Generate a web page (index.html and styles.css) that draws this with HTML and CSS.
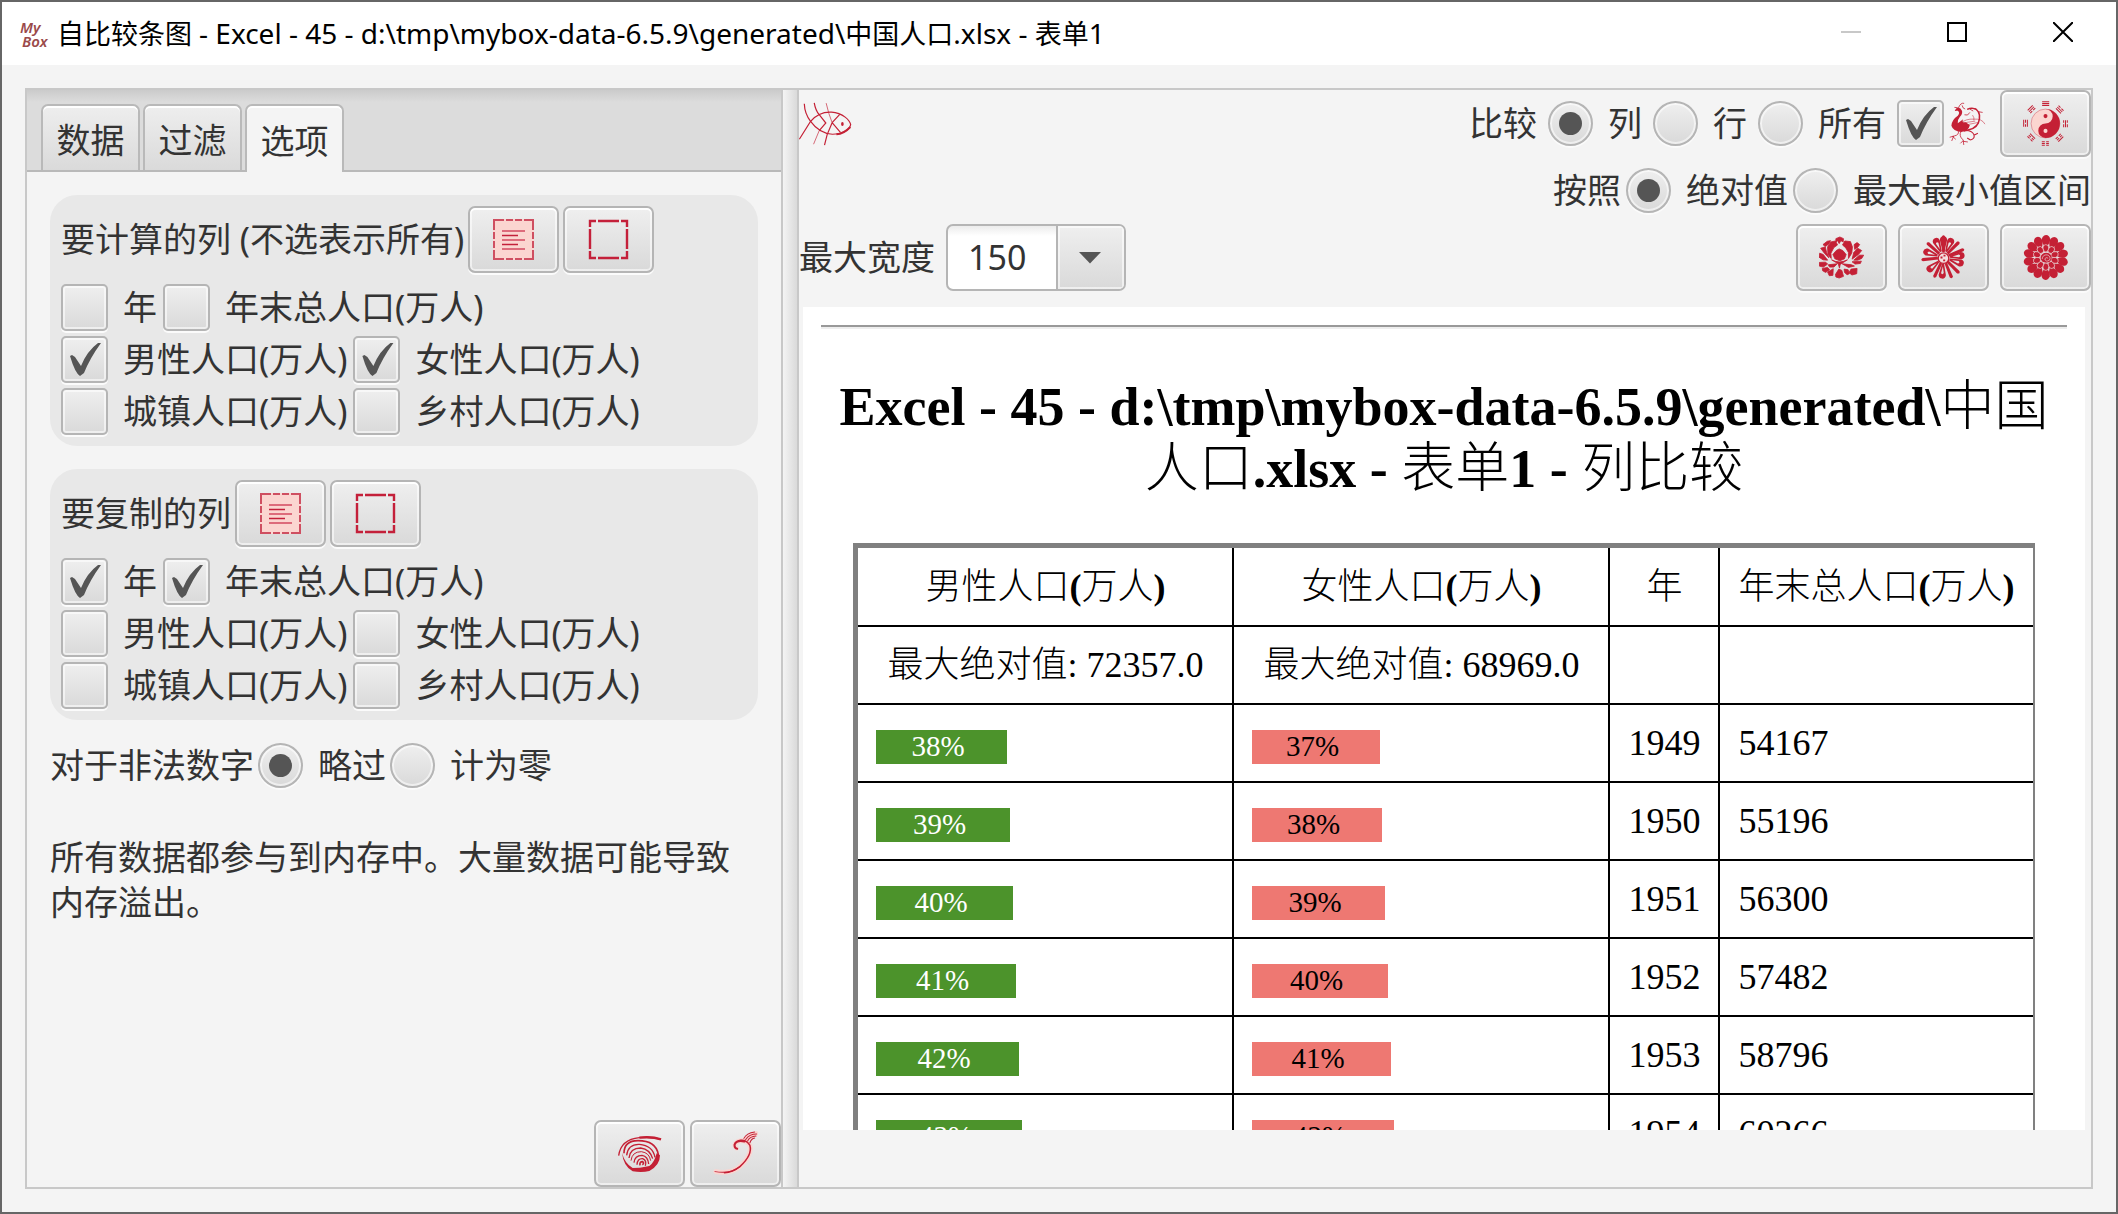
FILE: index.html
```html
<!DOCTYPE html>
<html lang="zh-CN">
<head>
<meta charset="utf-8">
<title>自比较条图</title>
<link rel="stylesheet" href="styles.css">
</head>
<body>
<svg class="sprite" aria-hidden="true">
  <defs>
    <symbol id="select-all" viewBox="0 0 41 41">
      <rect x="0" y="0" width="41" height="41" fill="#fbd5d0"/>
      <path d="M1 11V1H11M13 1H20M22 1H29M31 1H40V11M40 13V20M40 22V29M40 31V40H31M29 40H22M20 40H13M11 40H1V31M1 29V22M1 20V13" fill="none" stroke="#cf4f61" stroke-width="2"/>
      <path d="M9 12H32M9 21H32M9 30H32" stroke="#dd6b7b" stroke-width="2"/>
      <path d="M9 16.5H25M9 25.5H25" stroke="#c4203a" stroke-width="1.5"/>
    </symbol>
    <symbol id="select-none" viewBox="0 0 41 41">
      <path d="M2 8V2H8M10 2H31M33 2H39V8M39 10V30M39 32V39H33M31 39H10M8 39H2V32M2 30V10" fill="none" stroke="#c4203a" stroke-width="2.4"/>
    </symbol>
    <symbol id="fish" viewBox="57 130 160 132">
      <g fill="none" stroke="#c42035" stroke-width="3.6">
        <path d="M92 188C112 164 135 159 155 160C190 162 211 186 213 198C209 216 184 227 158 227C128 225 105 206 92 188Z"/>
        <path d="M73 135C74 160 84 178 92 188L58 242M103 132Q107 155 118 168L138 193L118 216"/>
        <path d="M157 192L180 167M157 192L182 221M157 192L142 228L134 260"/>
        <path d="M170 227Q192 226 212 205" stroke-width="6"/>
        <path d="M118 216L101 257M139 133Q146 165 157 192" stroke-width="2"/>
      </g>
      <ellipse cx="188" cy="196" rx="4" ry="6" fill="#c42035"/>
    </symbol>
    <symbol id="phoenix" viewBox="30 32 110 134">
      <path d="M47 62Q52 47 64 54Q75 66 62 80Q54 90 56 98L72 86Q66 98 80 95L92 104Q88 122 66 124Q42 122 37 106Q38 88 56 76Q64 66 56 61Q52 60 47 62Z" fill="#c42035"/>
      <g fill="none" stroke="#c42035" stroke-width="2.4">
        <path d="M84 57Q100 50 112 58Q127 70 117 98Q108 117 74 121" stroke-width="4.5"/>
        <path d="M46 51L56 52M58 53Q64 36 75 39M69 45Q70 54 78 56M76 73Q86 78 92 66M92 56L102 62M104 56Q110 50 114 60M118 64L130 66"/>
        <path d="M62 100Q80 84 104 86Q128 84 137 101M60 106Q84 92 108 92M66 112Q92 98 116 96M100 74Q106 82 104 90" stroke-width="1.6"/>
        <path d="M58 122Q60 133 46 136L32 140M44 136L38 151M40 137L50 146"/>
        <path d="M66 122Q58 136 72 148L74 163M72 150L64 158M72 152L86 154"/>
        <path d="M80 120Q98 120 104 132Q108 144 94 148M104 134L116 128M94 148L84 142" stroke-width="3.2"/>
      </g>
    </symbol>
    <symbol id="bagua" viewBox="246 30 140 140">
      <circle cx="316" cy="100" r="43" fill="#fbd5d0" stroke="#cf5565" stroke-width="1.5"/>
      <path d="M316 57A43 43 0 0 1 316 143A21.5 21.5 0 0 1 316 100A21.5 21.5 0 0 0 316 57Z" fill="#c42035"/>
      <circle cx="316" cy="78" r="6" fill="#c42035"/><circle cx="316" cy="122" r="6" fill="#fbd5d0"/>
      <g fill="none" stroke="#c42035" stroke-width="3">
        <path d="M306 35H327M306 40.500H327M306 46H327"/>
        <path transform="rotate(45 316 100)" d="M306 35H314M318 35H327M306 40.500H327M306 46H327"/>
        <path transform="rotate(90 316 100)" d="M306 35H314M318 35H327M306 40.500H327M306 46H314M318 46H327"/>
        <path transform="rotate(135 316 100)" d="M306 35H327M306 40.500H314M318 40.500H327M306 46H314M318 46H327"/>
        <path transform="rotate(180 316 100)" d="M306 35H314M318 35H327M306 40.500H314M318 40.500H327M306 46H314M318 46H327"/>
        <path transform="rotate(225 316 100)" d="M306 35H314M318 35H327M306 40.500H314M318 40.500H327M306 46H327"/>
        <path transform="rotate(270 316 100)" d="M306 35H327M306 40.500H314M318 40.500H327M306 46H327"/>
        <path transform="rotate(315 316 100)" d="M306 35H327M306 40.500H327M306 46H314M318 46H327"/>
      </g>
    </symbol>
    <symbol id="peony" viewBox="177 77 136 136">
      <g fill="#c42035" stroke="#c42035" stroke-width="2.5" stroke-linejoin="round">
        <path d="M219 136L229 124L238 119L249 124L259 136L254 149L240 155L225 149Z"/>
        <path d="M228 88L240 83L251 88L250 98L243 94L238 103L233 94L228 98Z"/>
        <path d="M213 98L227 95L233 107L222 115L213 132L214 148L204 136L203 113Z"/>
        <path d="M255 95L272 97L278 113L276 132L266 148L266 130L258 116L248 107Z"/>
        <path d="M189 106L202 96L212 94L207 104L196 112Z"/>
        <path d="M283 106L292 100L300 106L294 114L285 121Z"/>
        <path d="M182 117L196 113L200 130L207 146L194 133Z"/>
        <path d="M282 130L294 117L306 124L296 136L277 150Z"/>
        <path d="M179 132L190 136L203 153L189 152L177 144Z"/>
        <path d="M282 153L299 138L312 138L306 148L294 153Z"/>
        <path d="M178 160L197 159L203 165L190 174L178 171Z"/>
        <path d="M277 158L305 156L302 163L286 165Z"/>
        <path d="M205 167L232 164L222 174L209 174Z"/>
        <path d="M247 164L275 167L284 171L266 175Z"/>
        <path d="M187 178L203 175L209 182L197 190L188 185Z"/>
        <path d="M274 180L292 178L291 194L276 198L268 190Z"/>
        <path d="M203 189L220 179L219 199L208 200Z"/>
        <path d="M253 180L265 182L269 194L262 197L254 190Z"/>
        <path d="M227 196L237 180L246 184L251 202L238 207L228 204Z"/>
        <path d="M215 152Q238 165 263 152L241 166L239 177L235 164Z"/>
      </g>
    </symbol>
    <symbol id="daisy" viewBox="483 75 136 136">
      <g fill="#c42035">
        <path id="daisy-thin" d="M547 126L546 80Q551 71 556 80L555 126Z"/>
        <use href="#daisy-thin" transform="rotate(45 551 143)"/>
        <use href="#daisy-thin" transform="rotate(68 551 143)"/>
        <use href="#daisy-thin" transform="rotate(135 551 143)"/>
        <use href="#daisy-thin" transform="rotate(158 551 143)"/>
        <use href="#daisy-thin" transform="rotate(205 551 143)"/>
        <use href="#daisy-thin" transform="rotate(264 551 143)"/>
        <use href="#daisy-thin" transform="rotate(312 551 143)"/>
        <g id="daisy-wide"><path fill-rule="evenodd" d="M548 124L540 90Q541 79 551 79Q561 79 562 90L554 124ZM551 116L555 96Q551 89 547 96Z"/></g>
        <use href="#daisy-wide" transform="rotate(24 551 143)"/>
        <use href="#daisy-wide" transform="rotate(84 551 143)"/>
        <use href="#daisy-wide" transform="rotate(108 551 143)"/>
        <use href="#daisy-wide" transform="rotate(184 551 143)"/>
        <use href="#daisy-wide" transform="rotate(230 551 143)"/>
        <use href="#daisy-wide" transform="rotate(288 551 143)"/>
        <use href="#daisy-wide" transform="rotate(336 551 143)"/>
      </g>
      <circle cx="551" cy="145" r="16" fill="#f4dfdf" stroke="#c42035" stroke-width="4"/>
      <path d="M542 140h6v6h-6zM551 135h6v5h-6zM550 149h6v5h-6z" fill="#c42035"/>
    </symbol>
    <symbol id="dahlia" viewBox="789 77 136 136">
      <g fill="#c42035">
        <path id="dahlia-outer" d="M858 115Q844 101 846 88Q850 77 859 77Q869 78 871 89Q872 102 858 115Z"/>
        <use href="#dahlia-outer" transform="rotate(26 858 145)"/>
        <use href="#dahlia-outer" transform="rotate(51 858 145)"/>
        <use href="#dahlia-outer" transform="rotate(77 858 145)"/>
        <use href="#dahlia-outer" transform="rotate(103 858 145)"/>
        <use href="#dahlia-outer" transform="rotate(128 858 145)"/>
        <use href="#dahlia-outer" transform="rotate(154 858 145)"/>
        <use href="#dahlia-outer" transform="rotate(180 858 145)"/>
        <use href="#dahlia-outer" transform="rotate(206 858 145)"/>
        <use href="#dahlia-outer" transform="rotate(231 858 145)"/>
        <use href="#dahlia-outer" transform="rotate(257 858 145)"/>
        <use href="#dahlia-outer" transform="rotate(283 858 145)"/>
        <use href="#dahlia-outer" transform="rotate(308 858 145)"/>
        <use href="#dahlia-outer" transform="rotate(334 858 145)"/>
      </g>
      <g fill="#c42035" stroke="#ead9d9" stroke-width="2">
        <ellipse id="dahlia-inner" cx="858" cy="117" rx="9" ry="11"/>
        <use href="#dahlia-inner" transform="rotate(36 858 145)"/>
        <use href="#dahlia-inner" transform="rotate(72 858 145)"/>
        <use href="#dahlia-inner" transform="rotate(108 858 145)"/>
        <use href="#dahlia-inner" transform="rotate(144 858 145)"/>
        <use href="#dahlia-inner" transform="rotate(180 858 145)"/>
        <use href="#dahlia-inner" transform="rotate(216 858 145)"/>
        <use href="#dahlia-inner" transform="rotate(252 858 145)"/>
        <use href="#dahlia-inner" transform="rotate(288 858 145)"/>
        <use href="#dahlia-inner" transform="rotate(324 858 145)"/>
      </g>
      <ellipse cx="859" cy="146" rx="17" ry="15" fill="#c42035"/>
      <path d="M847 150Q848 136 862 137Q875 142 869 153Q857 160 855 149Q858 143 865 147" fill="none" stroke="#ead9d9" stroke-width="2"/>
    </symbol>
    <symbol id="shell" viewBox="86 64 132 112">
      <g fill="none" stroke="#c42035">
        <path d="M88 125Q95 76 150 71Q188 67 215 76" stroke-width="4"/>
        <path d="M150 71Q188 67 215 76" stroke-width="7"/>
        <path d="M104 118Q104 80 146 80Q200 80 207 122Q208 148 184 162" stroke-width="5"/>
        <path d="M112 124Q116 90 150 91Q190 94 197 130" stroke-width="4"/>
        <path d="M119 132Q122 102 154 102Q182 106 190 134" stroke-width="4"/>
        <path d="M125 140Q128 113 156 113Q180 116 184 140" stroke-width="3"/>
        <path d="M134 146Q136 124 158 124Q176 127 178 150" stroke-width="4"/>
        <path d="M143 152Q144 133 160 134Q173 140 168 155" stroke-width="4"/>
        <path d="M152 154Q150 143 160 143Q166 148 159 152" stroke-width="5"/>
      </g>
      <path d="M98 116Q106 148 130 162L152 161L180 156Q194 148 202 118L212 124Q212 154 180 171Q158 177 130 172Q102 156 98 116Z" fill="#c42035"/>
    </symbol>
    <symbol id="plume" viewBox="366 46 134 140">
      <g fill="none" stroke-linecap="round">
        <g stroke="#fbd5d0" stroke-width="14">
          <path d="M374 170Q418 178 446 155Q484 120 476 92Q462 72 440 80Q424 90 436 100M464 72L494 56"/>
        </g>
        <g stroke="#c42035" stroke-width="3">
          <path d="M372 170Q418 178 446 155"/>
          <path d="M400 173Q424 172 446 155Q484 120 476 92Q466 74 446 77" stroke-width="4.500"/>
          <path d="M460 80Q436 74 430 90Q430 101 438 102" stroke-width="6"/>
          <path d="M458 71Q466 55 490 52M463 75Q474 58 496 58M469 79Q476 65 494 64M476 84Q480 72 490 70"/>
        </g>
      </g>
    </symbol>
  </defs>
</svg>

<div class="window">
  <header class="titlebar">
    <span class="logo" aria-hidden="true"><span>My</span><span>Box</span></span>
    <h1 class="title">自比较条图 <span class="latin">- Excel - 45 - d:\tmp\mybox-data-6.5.9\generated\</span>中国人口<span class="latin">.xlsx - </span>表单<span class="latin">1</span></h1>
    <div class="caption">
      <button type="button" aria-label="最小化" disabled><svg width="20" height="20"><path d="M0 10H20" stroke="#c8c8c8" stroke-width="2"/></svg></button>
      <button type="button" aria-label="最大化"><svg width="20" height="20"><path d="M1 1H19V19H1Z" fill="none" stroke="#000" stroke-width="2"/></svg></button>
      <button type="button" aria-label="关闭"><svg width="20" height="20"><path d="M0 0L20 20M20 0L0 20" stroke="#000" stroke-width="2"/></svg></button>
    </div>
  </header>

  <main class="split">
    <section class="left">
      <div class="tabs" role="tablist">
        <button type="button" class="tab" role="tab">数据</button>
        <button type="button" class="tab" role="tab">过滤</button>
        <button type="button" class="tab selected" role="tab" aria-selected="true">选项</button>
      </div>
      <div class="options">
        <fieldset class="group">
          <div class="row heading">
            <span>要计算的列 (不选表示所有)</span>
            <button type="button" class="btn" aria-label="全选"><svg class="ic-box"><use href="#select-all"/></svg></button>
            <button type="button" class="btn" aria-label="全不选"><svg class="ic-box"><use href="#select-none"/></svg></button>
          </div>
          <div class="row">
            <label class="choice"><input type="checkbox">年</label>
            <label class="choice"><input type="checkbox">年末总人口(万人)</label>
          </div>
          <div class="row">
            <label class="choice"><input type="checkbox" checked>男性人口(万人)</label>
            <label class="choice"><input type="checkbox" checked>女性人口(万人)</label>
          </div>
          <div class="row">
            <label class="choice"><input type="checkbox">城镇人口(万人)</label>
            <label class="choice"><input type="checkbox">乡村人口(万人)</label>
          </div>
        </fieldset>
        <fieldset class="group">
          <div class="row heading">
            <span>要复制的列</span>
            <button type="button" class="btn" aria-label="全选"><svg class="ic-box"><use href="#select-all"/></svg></button>
            <button type="button" class="btn" aria-label="全不选"><svg class="ic-box"><use href="#select-none"/></svg></button>
          </div>
          <div class="row">
            <label class="choice"><input type="checkbox" checked>年</label>
            <label class="choice"><input type="checkbox" checked>年末总人口(万人)</label>
          </div>
          <div class="row">
            <label class="choice"><input type="checkbox">男性人口(万人)</label>
            <label class="choice"><input type="checkbox">女性人口(万人)</label>
          </div>
          <div class="row">
            <label class="choice"><input type="checkbox">城镇人口(万人)</label>
            <label class="choice"><input type="checkbox">乡村人口(万人)</label>
          </div>
        </fieldset>
        <div class="row heading">
          <span>对于非法数字</span>
          <label class="choice"><input type="radio" name="invalid" checked>略过</label>
          <label class="choice"><input type="radio" name="invalid">计为零</label>
        </div>
        <p class="note">所有数据都参与到内存中。大量数据可能导致内存溢出。</p>
      </div>
      <div class="row actions">
        <button type="button" class="btn" aria-label="恢复"><svg class="ic-shell"><use href="#shell"/></svg></button>
        <button type="button" class="btn" aria-label="确定"><svg class="ic-plume"><use href="#plume"/></svg></button>
      </div>
    </section>

    <div class="divider" role="separator"></div>

    <section class="right">
      <div class="toolbar">
        <svg class="ic-fish" role="img" aria-label="提示"><use href="#fish"/></svg>
        <span class="spacer"></span>
        <span>比较</span>
        <label class="choice"><input type="radio" name="compare" checked>列</label>
        <label class="choice"><input type="radio" name="compare">行</label>
        <label class="choice"><input type="radio" name="compare">所有</label>
        <label class="choice tight"><input type="checkbox" checked aria-label="弹出"><svg class="ic-phoenix"><use href="#phoenix"/></svg></label>
        <button type="button" class="btn" aria-label="功能"><svg class="ic-bagua"><use href="#bagua"/></svg></button>
      </div>
      <div class="toolbar compact">
        <span class="spacer"></span>
        <span>按照</span>
        <label class="choice"><input type="radio" name="by" checked>绝对值</label>
        <label class="choice"><input type="radio" name="by">最大最小值区间</label>
      </div>
      <div class="toolbar">
        <label for="max-width">最大宽度</label>
        <span class="combo"><select id="max-width"><option>150</option></select></span>
        <span class="spacer"></span>
        <button type="button" class="btn" aria-label="随机颜色"><svg class="ic-flower"><use href="#peony"/></svg></button>
        <button type="button" class="btn" aria-label="数据"><svg class="ic-flower"><use href="#daisy"/></svg></button>
        <button type="button" class="btn" aria-label="编辑"><svg class="ic-flower"><use href="#dahlia"/></svg></button>
      </div>

      <article class="web">
        <hr>
        <h2>Excel - 45 - d:\tmp\mybox-data-6.5.9\generated\<span class="han">中国人口</span>.xlsx - <span class="han">表单</span>1 - <span class="han">列比较</span></h2>
        <table>
          <thead>
            <tr>
              <th class="bar-col"><span class="han">男性人口</span>(<span class="han">万人</span>)</th>
              <th class="bar-col"><span class="han">女性人口</span>(<span class="han">万人</span>)</th>
              <th><span class="han">年</span></th>
              <th><span class="han">年末总人口</span>(<span class="han">万人</span>)</th>
            </tr>
          </thead>
          <tbody>
            <tr><td class="center"><span class="han">最大绝对值</span>: 72357.0</td><td class="center"><span class="han">最大绝对值</span>: 68969.0</td><td></td><td></td></tr>
            <tr><td><div class="bar male" style="width:131px">38%</div></td><td><div class="bar female" style="width:128px">37%</div></td><td>1949</td><td>54167</td></tr>
            <tr><td><div class="bar male" style="width:134px">39%</div></td><td><div class="bar female" style="width:130px">38%</div></td><td>1950</td><td>55196</td></tr>
            <tr><td><div class="bar male" style="width:137px">40%</div></td><td><div class="bar female" style="width:133px">39%</div></td><td>1951</td><td>56300</td></tr>
            <tr><td><div class="bar male" style="width:140px">41%</div></td><td><div class="bar female" style="width:136px">40%</div></td><td>1952</td><td>57482</td></tr>
            <tr><td><div class="bar male" style="width:143px">42%</div></td><td><div class="bar female" style="width:139px">41%</div></td><td>1953</td><td>58796</td></tr>
            <tr><td><div class="bar male" style="width:146px">43%</div></td><td><div class="bar female" style="width:142px">42%</div></td><td>1954</td><td>60266</td></tr>
          </tbody>
        </table>
      </article>
    </section>
  </main>
</div>
</body>
</html>
```
FILE: styles.css
```css
* { box-sizing: border-box; }

body {
  margin: 0;
  font-family: "Noto Sans", "Noto Sans CJK SC", sans-serif;
  font-size: 34px;
  line-height: 45px;
  color: #333;
  background: #f4f4f4;
}

button, input, select { margin: 0; font: inherit; color: inherit; }

.sprite { position: absolute; width: 0; height: 0; }

.window {
  display: flex;
  flex-direction: column;
  height: 100vh;
  border: 2px solid #666;
}

/* title bar */
.titlebar {
  display: flex;
  align-items: center;
  flex: none;
  height: 63px;
  padding-left: 18px;
  background: #fff;
}
.logo {
  display: flex;
  flex-direction: column;
  width: 37px;
  font-size: 15px;
  font-style: italic;
  font-weight: 600;
  line-height: 14px;
  color: #9a4a4a;
}
.logo span + span { padding-left: 2px; }
.title {
  flex: 1;
  margin: 0;
  font-size: 27px;
  font-weight: 400;
  line-height: 40px;
  white-space: nowrap;
  color: #000;
}
.latin { font-size: 28px; }
.caption { display: flex; align-self: stretch; padding-bottom: 3px; }
.caption button {
  display: grid;
  place-items: center;
  width: 106px;
  padding: 0;
  border: 0;
  background: none;
}

/* split pane */
.split {
  display: flex;
  flex: 1;
  min-height: 0;
  margin: 23px;
  border: 2px solid #c8c8c8;
}
.left {
  display: flex;
  flex-direction: column;
  flex: none;
  width: 754px;
}
.divider {
  flex: none;
  width: 18px;
  border: solid #c8c8c8;
  border-width: 0 2px;
  background: linear-gradient(to right, #f4f4f4, #dadada);
}
.right {
  display: flex;
  flex-direction: column;
  flex: 1;
  min-width: 0;
}

/* tabs */
.tabs {
  display: flex;
  gap: 3px;
  height: 82px;
  padding: 14px 14px 0;
  border-bottom: 2px solid #b9b9b9;
  background: linear-gradient(#cbcbcb, #dcdcdc 12px);
}
.tab {
  width: 99px;
  padding: 4px 0 0;
  border: 2px solid #b9b9b9;
  border-bottom: 0;
  border-radius: 7px 7px 0 0;
  background: linear-gradient(#eeeeee, #dadada);
  box-shadow: inset 0 2px #fff;
}
.tab.selected { margin-bottom: -2px; background: #f4f4f4; }

.options {
  display: flex;
  flex-direction: column;
  gap: 23px;
  flex: 1;
  padding: 23px 23px 0;
}
.group {
  display: flex;
  flex-direction: column;
  gap: 5px;
  margin: 0;
  padding: 11px;
  border: 0;
  border-radius: 27px;
  background: #e8e8e8;
}
.row { display: flex; align-items: center; gap: 6px; }
.heading { gap: 4px; }
.group .heading { margin-bottom: 6px; }
.note { margin: 24px 0 0; }
.actions { gap: 5px; justify-content: flex-end; }

/* controls */
.btn {
  display: grid;
  place-items: center;
  flex: none;
  width: 91px;
  height: 67px;
  padding: 0;
  border: 2px solid #b5b5b5;
  border-radius: 7px;
  background: linear-gradient(#efefef, #d9d9d9);
  box-shadow: inset 0 0 0 2px #ffffff90, inset 0 2px #fff, 0 2px #fbfbfb;
}
.actions .btn { box-shadow: inset 0 0 0 2px #ffffff90, inset 0 2px #fff; }
.choice { display: flex; align-items: center; gap: 15px; }
.choice.tight { gap: 2px; }

input[type="checkbox"], input[type="radio"] {
  display: grid;
  place-items: center;
  appearance: none;
  flex: none;
  width: 47px;
  height: 47px;
  border: 2px solid #b5b5b5;
  border-radius: 5px;
  background: linear-gradient(#efefef, #d9d9d9);
  box-shadow: inset 0 0 0 2px #ffffff90, 0 2px #fbfbfb;
}
input[type="radio"] { width: 45px; height: 45px; border-radius: 50%; }
input[type="checkbox"]:checked::before {
  content: "";
  width: 43px;
  height: 43px;
  background: #555;
  clip-path: path("M7 18L9 17L12 19L18 28Q24 13 35 5L38 5Q27 20 21 35L17 38Q12 35 7 18Z");
}
input[type="radio"]:checked::before {
  content: "";
  width: 23px;
  height: 23px;
  border-radius: 50%;
  background: #555;
}

.toolbar {
  display: flex;
  align-items: center;
  flex: none;
  gap: 11px;
  height: 67px;
}
.toolbar.compact { gap: 5px; }
.spacer { flex: 1; }

.combo {
  display: grid;
  grid-template-columns: 1fr 68px;
  width: 180px;
  height: 67px;
  border: 2px solid #b5b5b5;
  border-radius: 7px;
  background: linear-gradient(#ececec, #fff 10px);
  overflow: hidden;
}
.combo select {
  grid-area: 1 / 1 / 2 / 3;
  appearance: none;
  padding: 0 0 0 20px;
  border: 0;
  background: none;
  z-index: 1;
}
.combo::after {
  content: "";
  grid-area: 1 / 2 / 2 / 3;
  border-left: 2px solid #b5b5b5;
  background: linear-gradient(#efefef, #d9d9d9);
  box-shadow: inset 0 0 0 2px #ffffff90;
}
.combo::before {
  content: "";
  grid-area: 1 / 2 / 2 / 3;
  place-self: center;
  z-index: 1;
  width: 23px;
  height: 12px;
  background: #555;
  clip-path: polygon(0 0, 100% 0, 50% 100%);
}

/* icons */
.ic-box { width: 41px; height: 41px; }
.ic-fish { width: 53px; height: 44px; }
.ic-phoenix { width: 43px; height: 45px; }
.ic-bagua { width: 47px; height: 47px; }
.ic-flower { width: 45px; height: 45px; }
.ic-shell { width: 44px; height: 38px; }
.ic-plume { width: 45px; height: 47px; }

/* rendered report */
.web {
  flex: 1;
  min-height: 0;
  margin: 16px 6px 57px 4px;
  padding: 18px;
  overflow: hidden;
  background: #fff;
  font-family: "Liberation Serif", "Noto Sans CJK SC", serif;
  font-size: 36px;
  line-height: 42px;
  color: #000;
}
.web hr {
  height: 4px;
  margin: 0;
  border: 0;
  border-top: 2px solid #999;
  border-bottom: 2px solid #eee;
}
.web h2 {
  margin: 47px 0 43px;
  font-size: 54px;
  line-height: 62px;
  text-align: center;
}
.han { font-weight: 300; }
.web table {
  margin: 0 auto;
  border: solid #808080;
  border-width: 5px 2px 0 5px;
  border-spacing: 0;
}
.web th, .web td {
  height: 78px;
  padding: 0 18px;
  border: solid #000;
  border-width: 0 2px 2px 0;
  text-align: left;
  white-space: nowrap;
}
.web th:last-child, .web td:last-child { border-right: 0; }
.web th, .web td.center { text-align: center; }
.web th { height: 79px; }
.web .bar-col { width: 376px; }
.bar {
  height: 34px;
  margin-top: 8px;
  padding-right: 8px;
  font-size: 29px;
  line-height: 32px;
  text-align: center;
}
.male { background: #4c932b; color: #fff; }
.female { background: #ee7872; }
```
